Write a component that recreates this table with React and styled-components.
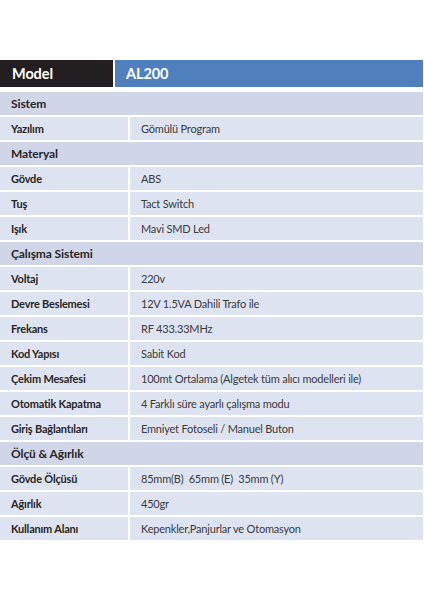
import React from "react";
import styled, { createGlobalStyle } from "styled-components";

const Global = createGlobalStyle`
  html, body { margin: 0; padding: 0; background: #ffffff; }
  body { font-family: Lato, "Open Sans", sans-serif; }
`;

const Page = styled.div`
  padding: 60px 1px 0 0;
  width: 423px;
`;

const Table = styled.div`
  display: flex;
  flex-direction: column;
  gap: 2px;
`;

const HeaderRow = styled.div`
  display: grid;
  grid-template-columns: 113px 1fr;
  column-gap: 2px;
  height: 27px;
  margin-bottom: 3px;
`;

const HeaderCell = styled.div`
  background: ${(p) => (p.$blue ? "#4f80bd" : "#231f20")};
  color: #ffffff;
  font-weight: 700;
  font-size: 14.5px;
  letter-spacing: -0.1px;
  display: flex;
  align-items: center;
  padding-left: ${(p) => (p.$blue ? "11px" : "12px")};
`;

const SectionRow = styled.div`
  background: #d1d5e8;
  height: 23px;
  display: flex;
  align-items: center;
  padding-left: 11px;
  font-weight: 700;
  font-size: 12px;
  letter-spacing: -0.1px;
  color: #262626;
`;

const DataRow = styled.div`
  display: grid;
  grid-template-columns: 128px 1fr;
  column-gap: 2px;
  height: 23px;
`;

const Cell = styled.div`
  background: #dee3f2;
  display: flex;
  align-items: center;
  padding-left: 11px;
  font-size: 11px;
  letter-spacing: -0.2px;
  white-space: pre;
  font-weight: ${(p) => (p.$label ? 700 : 400)};
  color: ${(p) => (p.$label ? "#262626" : "#3a3a3a")};
`;

const rows = [
  { s: "Sistem" },
  ["Yazılım", "Gömülü Program"],
  { s: "Materyal" },
  ["Gövde", "ABS"],
  ["Tuş", "Tact Switch"],
  ["Işık", "Mavi SMD Led"],
  { s: "Çalışma Sistemi" },
  ["Voltaj", "220v"],
  ["Devre Beslemesi", "12V 1.5VA Dahili Trafo ile"],
  ["Frekans", "RF 433.33MHz"],
  ["Kod Yapısı", "Sabit Kod"],
  ["Çekim Mesafesi", "100mt Ortalama (Algetek tüm alıcı modelleri ile)"],
  ["Otomatik Kapatma", "4 Farklı süre ayarlı çalışma modu"],
  ["Giriş Bağlantıları", "Emniyet Fotoseli / Manuel Buton"],
  { s: "Ölçü & Ağırlık" },
  ["Gövde Ölçüsü", "85mm(B)  65mm (E)  35mm (Y)"],
  ["Ağırlık", "450gr"],
  ["Kullanım Alanı", "Kepenkler,Panjurlar ve Otomasyon"],
];

export default function App() {
  return (
    <Page>
      <Global />
      <Table>
        <HeaderRow>
          <HeaderCell>Model</HeaderCell>
          <HeaderCell $blue>AL200</HeaderCell>
        </HeaderRow>
        {rows.map((r, i) =>
          Array.isArray(r) ? (
            <DataRow key={i}>
              <Cell $label>{r[0]}</Cell>
              <Cell>{r[1]}</Cell>
            </DataRow>
          ) : (
            <SectionRow key={i}>{r.s}</SectionRow>
          )
        )}
      </Table>
    </Page>
  );
}
